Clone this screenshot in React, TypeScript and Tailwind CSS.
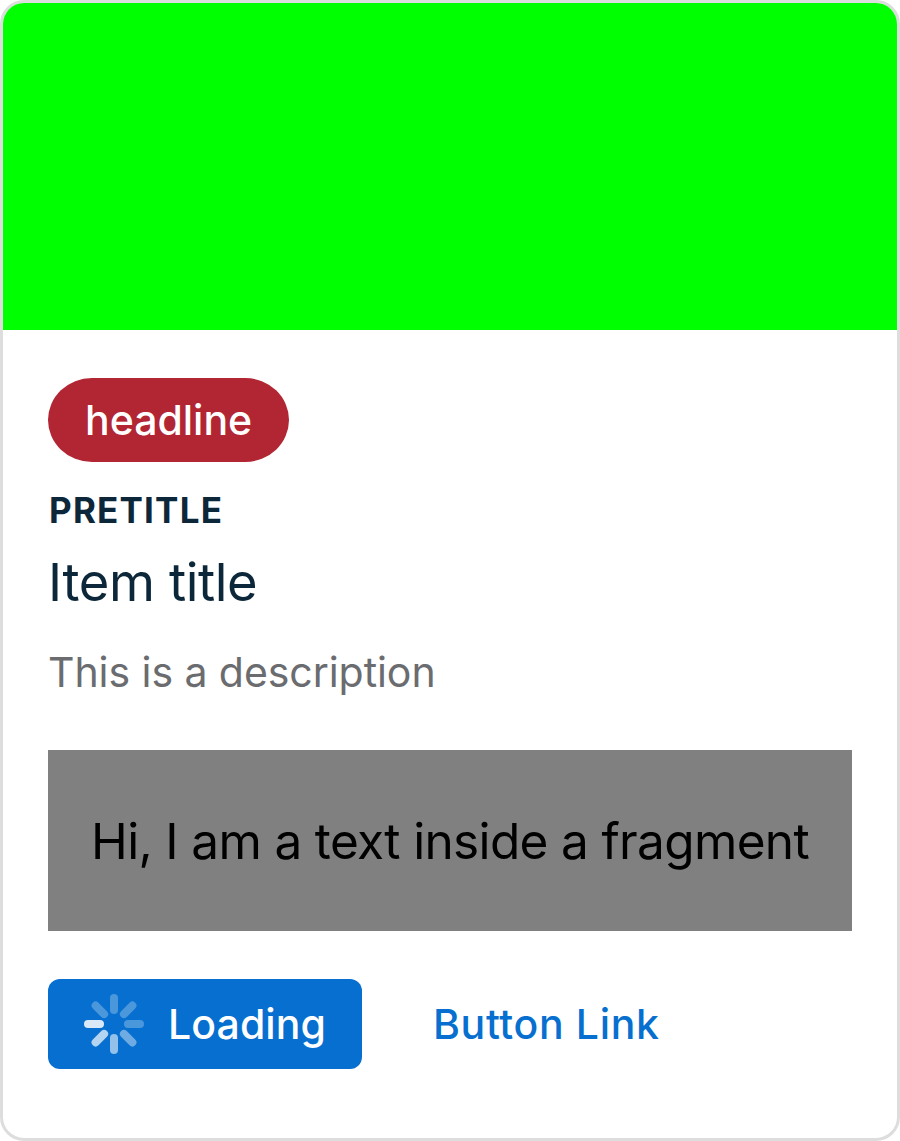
const petals = [
  [0, 0.28], [45, 0.28], [90, 0.28], [135, 0.42], [180, 0.57], [225, 0.7], [270, 0.85], [315, 0.28],
];

export default function App() {
  return (
    <main className="flex h-[1141px] w-[900px] flex-col overflow-hidden rounded-[24px] border-[3px] border-[#dddddd] bg-white font-['Inter',sans-serif]">
      <div className="h-[327px] shrink-0 bg-[#00ff00]" />
      <div className="flex flex-col items-start px-[45px] pt-12">
        <span className="flex h-[84px] w-[241px] items-center rounded-[44px/42px] bg-[#b22532] pt-[1px] pl-[37px] text-[41px] font-medium text-white">
          <span className="whitespace-nowrap">headline</span>
        </span>
        <p className="mt-[24px] h-[48px] pl-[1px] whitespace-nowrap text-[35px] leading-[48px] font-bold tracking-[1.2px] text-[#0b2739]">PRETITLE</p>
        <h1 className="mt-[12px] h-[72px] whitespace-nowrap text-[52.5px] leading-[73px] font-normal tracking-[-0.4px] text-[#0b2739]">Item title</h1>
        <p className="mt-[24px] h-[60px] whitespace-nowrap text-[41px] leading-[61px] tracking-[-0.06px] text-[#6b6c6f]">This is a description</p>
        <div className="mt-[48px] flex h-[181px] w-[804px] items-center bg-[#808080] pt-[1px] pl-[43px] text-[49.5px] text-black">
          <span className="whitespace-nowrap tracking-[-0.65px]">Hi, I am a text inside a fragment</span>
        </div>
        <div className="mt-[48px] flex items-center">
          <button className="flex h-[90px] w-[314px] items-center rounded-[12px] bg-[#066fcf] pl-[36px] text-[41px] font-medium text-white">
            <svg className="size-[60px]" viewBox="-30 -30 60 60">
              {petals.map(([a, o]) => (
                <rect key={a} x="-4" y="-30" width="8" height="20" rx="4" fill="white" opacity={o} transform={`rotate(${a})`} />
              ))}
            </svg>
            <span className="ml-[24px] pt-[1px] whitespace-nowrap tracking-[0.1px]">Loading</span>
          </button>
          <button className="ml-[71px] pt-[1px] whitespace-nowrap text-[41px] font-medium tracking-[0.65px] text-[#066fcf]">Button Link</button>
        </div>
      </div>
    </main>
  );
}
